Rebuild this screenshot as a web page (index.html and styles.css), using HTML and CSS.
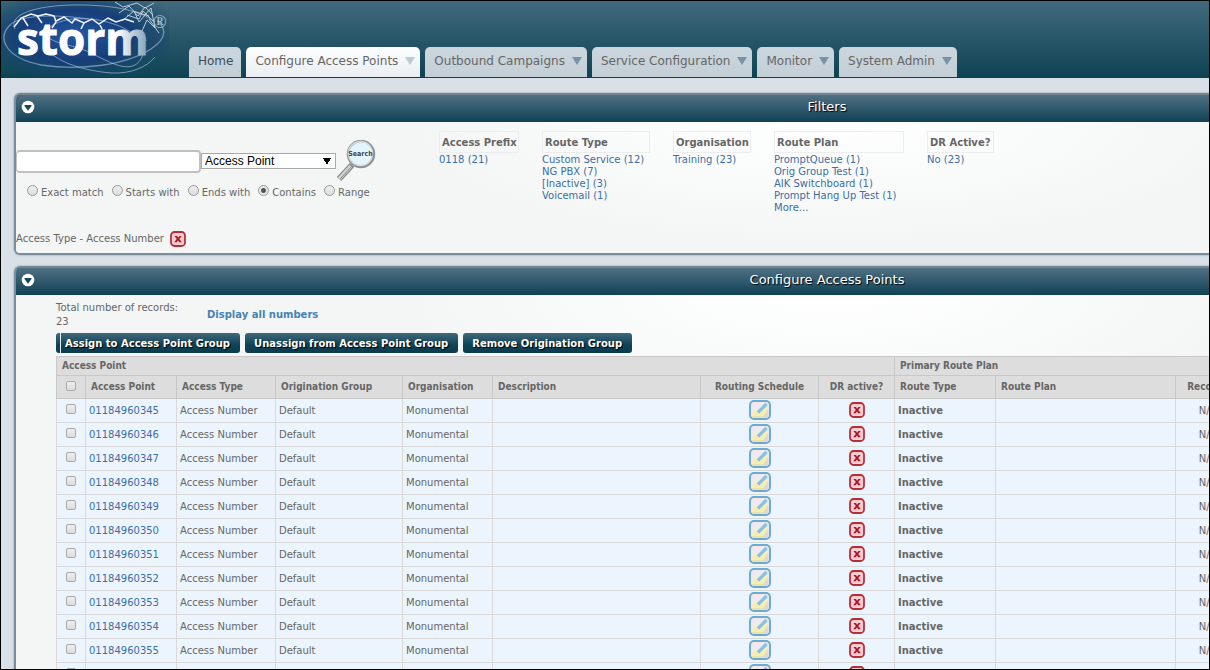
FILE: index.html
```html
<!DOCTYPE html>
<html lang="en">
<head>
<meta charset="utf-8">
<title>storm - Configure Access Points</title>
<link rel="stylesheet" href="styles.css">
</head>
<body>
<svg class="sprites" aria-hidden="true">
  <symbol id="icon-cross" viewBox="0 0 16 16">
    <rect x="1" y="1" width="14" height="14" rx="3.5" fill="#f8ccd0" stroke="#b3303a" stroke-width="1.8"/>
    <path d="M4.500 5h2.500l1.200 1.800L9.400 5h2.300L9.300 8l2.500 3.300H9.300L8 9.400l-1.300 1.900H4.200L6.800 8z" fill="#a81c29"/>
  </symbol>
  <symbol id="icon-note" viewBox="0 0 22 20">
    <rect x="1" y="1" width="20" height="18" rx="4" fill="#f1e9ee" stroke="#69abd3" stroke-width="2"/>
    <path d="M2.500 15.500 8 8l4 2 7-6v8l-5 6H4z" fill="#f6eeb4"/>
    <path d="M14 18l5.500-8v7l-2 1z" fill="#ddd8de"/>
    <path d="M9 12.500 17.500 4" fill="none" stroke="#84c0ea" stroke-width="3.200"/>
    <path d="M7.500 11.500 6.500 15l3.500-1z" fill="#f6e6a4"/>
    <path d="M3 17h11l5-7" fill="none" stroke="#e2d89f"/>
  </symbol>
  <symbol id="icon-collapse" viewBox="0 0 14 14">
    <circle cx="7" cy="7" r="6.3" fill="#fff"/>
    <path d="M3.500 5h7v1L7 10.800 3.500 6z" fill="#1d4558"/>
  </symbol>
</svg>

<div class="app">
  <header class="masthead">
    <svg class="logo" viewBox="0 0 168 76" role="img" aria-label="storm">
      <defs>
        <radialGradient id="glow" cx="44%" cy="45%" r="66%">
          <stop offset="0" stop-color="#2258a4"/>
          <stop offset=".5" stop-color="#173e79"/>
          <stop offset="1" stop-color="#124a62" stop-opacity="0"/>
        </radialGradient>
        <linearGradient id="word" x1="0" x2="1">
          <stop offset="0" stop-color="#fff"/>
          <stop offset=".76" stop-color="#fff"/>
          <stop offset="1" stop-color="#7f9fb8"/>
        </linearGradient>
      </defs>
      <rect width="168" height="76" fill="url(#glow)"/>
      <g fill="none" stroke="#a9c3e2">
        <path d="M14 28C6 12 40 3 84 4c40 1 60 9 70 17" stroke-width="1" opacity=".65"/>
        <path d="M10 23C-6 38 6 57 40 64c40 6 85 0 110-16 18-12 14-22 6-28" stroke-width="1.3" opacity=".6"/>
        <path d="M10 23C22 14 52 13 88 18M44 32c-8 18 20 36 66 40 20 1 36-6 44-16M44 32c6-12 30-18 58-12 26 6 48 20 38 38-10 16-30 4-50-6S50 44 44 32" stroke-width="1" opacity=".65"/>
        <path d="M13 26l7-9 10-4 7 2 8-2 8 2 2 6-4 6M55 20l8-4 8 6 3-4 9 4 8-4 7 5 9-6 8 4 9-3 9 3M22 17l5 8M36 15l5 7M83 22l-3 6M98 22l3 6" stroke="#eef5ff" stroke-width="1.5"/>
        <path d="M114 1l8 5 14-4 8 5 9-5M118 12l10-7 9 10 7-9 8 8M121 20l12-10 5 11 12-14 4 20-8-8-5 11 4 10M132 10l16 5M148 18l10 14M126 14l12 4 4-8 10 10" stroke="#c6d6e4" stroke-width="1" opacity=".9"/>
      </g>
      <text class="logo-word" x="16" y="54">storm</text>
      <text class="logo-mark" x="152" y="27">®</text>
    </svg>
    <nav class="tabs" aria-label="Main">
      <a class="tab tab-home" href="#">Home</a>
      <a class="tab tab-current" href="#">Configure Access Points<span class="caret"></span></a>
      <a class="tab" href="#">Outbound Campaigns<span class="caret"></span></a>
      <a class="tab" href="#">Service Configuration<span class="caret"></span></a>
      <a class="tab" href="#">Monitor<span class="caret"></span></a>
      <a class="tab" href="#">System Admin<span class="caret"></span></a>
    </nav>
  </header>

  <main class="content">
    <section class="panel">
      <div class="panel-bar">
        <button class="collapse" type="button" aria-label="Collapse filters"><svg class="collapse-icon"><use href="#icon-collapse"/></svg></button>
        <h2 class="panel-title">Filters</h2>
      </div>
      <div class="panel-body filters">
        <form class="search">
          <div class="search-row">
            <input class="search-text" type="text" aria-label="Search text">
            <select class="search-field" aria-label="Search field"><option>Access Point</option></select>
            <button class="search-go" type="button" aria-label="Search">
              <svg class="search-icon" viewBox="0 0 40 42">
                <path d="M16 25 3 39" stroke="#858585" stroke-width="6"/>
                <path d="M15 26 3 39" stroke="#d5d5d5" stroke-width="3.500"/>
                <path d="M16 26 4 39" stroke="#888" stroke-width="1"/>
                <circle cx="25" cy="14" r="13" fill="#e3f4fc" stroke="#8d9193" stroke-width="2.500"/>
                <circle cx="24.500" cy="13.500" r="12" fill="none" stroke="#d8dcde" stroke-width="1.500"/>
                <text class="search-icon-text" x="24.500" y="16" text-anchor="middle">Search</text>
              </svg>
            </button>
          </div>
          <div class="modes">
            <label class="mode"><input class="radio" type="radio" name="mode">Exact match</label>
            <label class="mode"><input class="radio" type="radio" name="mode">Starts with</label>
            <label class="mode"><input class="radio" type="radio" name="mode">Ends with</label>
            <label class="mode"><input class="radio" type="radio" name="mode" checked>Contains</label>
            <label class="mode"><input class="radio" type="radio" name="mode">Range</label>
          </div>
          <div class="applied">Access Type - Access Number
            <button class="icon-button" type="button" aria-label="Remove filter"><svg class="cross"><use href="#icon-cross"/></svg></button>
          </div>
        </form>
        <div class="facets">
          <div class="facet"><h3 class="facet-title">Access Prefix</h3><a class="link" href="#">0118 (21)</a></div>
          <div class="facet"><h3 class="facet-title">Route Type</h3><a class="link" href="#">Custom Service (12)</a><a class="link" href="#">NG PBX (7)</a><a class="link" href="#">[Inactive] (3)</a><a class="link" href="#">Voicemail (1)</a></div>
          <div class="facet"><h3 class="facet-title">Organisation</h3><a class="link" href="#">Training (23)</a></div>
          <div class="facet"><h3 class="facet-title">Route Plan</h3><a class="link" href="#">PromptQueue (1)</a><a class="link" href="#">Orig Group Test (1)</a><a class="link" href="#">AIK Switchboard (1)</a><a class="link" href="#">Prompt Hang Up Test (1)</a><a class="link" href="#">More...</a></div>
          <div class="facet"><h3 class="facet-title">DR Active?</h3><a class="link" href="#">No (23)</a></div>
        </div>
      </div>
    </section>

    <section class="panel">
      <div class="panel-bar">
        <button class="collapse" type="button" aria-label="Collapse access points"><svg class="collapse-icon"><use href="#icon-collapse"/></svg></button>
        <h2 class="panel-title">Configure Access Points</h2>
      </div>
      <div class="panel-body listing">
        <div class="summary">
          <p class="total">Total number of records: 23</p>
          <a class="link link-strong" href="#">Display all numbers</a>
        </div>
        <div class="actions">
          <button class="action action-split" type="button">Assign to Access Point Group</button>
          <button class="action" type="button">Unassign from Access Point Group</button>
          <button class="action" type="button">Remove Origination Group</button>
        </div>
        <table class="grid">
          <colgroup>
            <col class="c-check"><col class="c-point"><col class="c-type"><col class="c-group"><col class="c-org"><col class="c-desc"><col class="c-sched"><col class="c-dr"><col class="c-route"><col class="c-plan"><col class="c-rec"><col>
          </colgroup>
          <thead>
            <tr class="head-groups"><th colspan="8">Access Point</th><th colspan="4">Primary Route Plan</th></tr>
            <tr class="head-cols">
              <th class="mid"><input class="check" type="checkbox" aria-label="Select all"></th>
              <th>Access Point</th><th>Access Type</th><th>Origination Group</th><th>Organisation</th><th>Description</th><th class="mid">Routing Schedule</th><th class="mid">DR active?</th><th>Route Type</th><th>Route Plan</th><th class="mid">Records</th><th></th>
            </tr>
          </thead>
          <tbody id="rows"></tbody>
        </table>
      </div>
    </section>
  </main>
</div>
<script src="rows.js"></script>
</body>
</html>
```
FILE: rows.js
```js
const body = document.getElementById('rows');
for (let number = 1184960345; number <= 1184960356; number += 1) {
  const id = '0' + number;
  const row = document.createElement('tr');
  row.innerHTML = `
    <td class="mid"><input class="check" type="checkbox" aria-label="Select ${id}"></td>
    <td><a class="link" href="#">${id}</a></td>
    <td>Access Number</td><td>Default</td><td>Monumental</td><td></td>
    <td class="mid"><button class="icon-button" type="button" aria-label="Edit schedule"><svg class="note"><use href="#icon-note"/></svg></button></td>
    <td class="mid"><svg class="cross" role="img" aria-label="No"><use href="#icon-cross"/></svg></td>
    <td class="strong">Inactive</td><td></td><td class="mid">N/A</td><td></td>`;
  body.append(row);
}
```
FILE: styles.css
```css
* { box-sizing: border-box; }

body {
  margin: 0;
  height: 100vh;
  border: 1px solid #000;
  overflow: hidden;
  background: #d9e0e8;
  color: #666;
  font: 10px/14px Verdana, "DejaVu Sans", sans-serif;
}

h2, h3, p { margin: 0; }
button { font-family: inherit; }
.sprites { position: absolute; width: 0; height: 0; }
.app { min-width: 1652px; }

.masthead {
  display: flex;
  align-items: flex-end;
  height: 77px;
  border-bottom: 1px solid #0f3f52;
  background: linear-gradient(#42697d, #0e4354);
}
.logo { flex: none; width: 168px; height: 76px; }
.logo-word {
  fill: url(#word);
  stroke: url(#word);
  stroke-width: 1px;
  font: 700 44px "Open Sans", sans-serif;
}
.logo-mark { font: 18px "Liberation Serif", serif; fill: #b8c9d6; }

.tabs { display: flex; gap: 5px; padding-left: 20px; }
.tab {
  display: flex;
  align-items: center;
  gap: 7px;
  height: 30px;
  padding: 0 5px 3px 9px;
  border-radius: 5px 5px 0 0;
  background: linear-gradient(#ccd6de, #c3ced5);
  color: #666;
  font-size: 12px;
  text-decoration: none;
}
.tab-home { padding-right: 8px; color: #3c4b5c; }
.tab-current { background: linear-gradient(#fcfdfe, #eaeef2); }
.caret {
  border: 5px solid transparent;
  border-top: 8px solid #7893a8;
  border-bottom: 0;
}
.tab-current .caret { border-top-color: #bccbd4; }

.content { display: grid; gap: 11px; padding: 15px 13px; }
.panel {
  border: 2px solid #7a8d98;
  border-top: 0;
  border-radius: 6px;
  overflow: hidden;
  box-shadow: 0 0 2px #7a8d98;
}
.panel-bar {
  display: flex;
  align-items: center;
  height: 29px;
  padding: 0 5px 4px;
  border-top: 2px solid #758590;
  background: linear-gradient(#507083, #104155);
}
.collapse { padding: 0; border: 0; background: none; }
.collapse-icon { display: block; width: 14px; height: 14px; }
.panel-title {
  flex: 1;
  padding-right: 14px;
  color: #fff;
  font-size: 13px;
  font-weight: 400;
  text-align: center;
  text-shadow: 1px 1px 1px #000;
}
.panel-body {
  background: radial-gradient(ellipse 420px 120px at 50% 0, #fff, #f4f6f6);
}

.filters { display: flex; min-height: 131px; }
.search { flex: none; width: 423px; padding-top: 18px; }
.search-row { display: flex; align-items: center; }
.search-text {
  width: 185px;
  height: 23px;
  border: 2px solid #c0c0c0;
  border-left-width: 1px;
  border-radius: 4px;
  background: #fff;
}
.search-field {
  width: 135px;
  height: 16px;
  padding: 0 3px;
  appearance: none;
  border: 1px solid #a9a9a9;
  border-radius: 0;
  background:
    linear-gradient(to top right, transparent 50%, #000 50%) no-repeat right 8px center / 4px 7px,
    linear-gradient(to top left, transparent 50%, #000 50%) no-repeat right 4px center / 4px 7px,
    #fff;
  color: #000;
  font: 12px/14px "Liberation Sans", sans-serif;
}
.search-go { padding: 0; border: 0; background: none; }
.search-icon { display: block; width: 40px; height: 42px; }
.search-icon-text { font: 700 7px "DejaVu Sans Condensed", sans-serif; fill: #444; }

.modes { display: flex; gap: 8px; padding: 3px 11px; }
.mode { display: flex; align-items: center; gap: 3px; }
.radio {
  width: 11px;
  height: 11px;
  margin: 0 0 4px;
  appearance: none;
  border: 1px solid #999;
  border-radius: 50%;
  background: linear-gradient(#eee, #ddd);
}
.radio:checked { background: radial-gradient(circle, #555 0 2px, #e8e8e8 3px); }
.applied { display: flex; align-items: center; gap: 6px; padding-top: 28px; }
.icon-button { display: inline-block; padding: 0; border: 0; background: none; vertical-align: middle; }
.cross { display: block; width: 16px; height: 16px; }

.facets {
  display: grid;
  grid-template-columns: 80px 108px 78px 130px 67px;
  align-items: start;
  gap: 23px;
  padding-top: 9px;
}
.facet { display: flex; flex-direction: column; line-height: 12px; white-space: nowrap; }
.facet-title {
  height: 22px;
  margin-bottom: 1px;
  padding: 4px 2px;
  border: 1px solid #ebedee;
  font-size: 10px;
  line-height: 14px;
}
.link { color: #3a6ea5; text-decoration: none; }

.listing { padding: 6px 40px; }
.summary { display: flex; align-items: center; gap: 21px; }
.total { width: 130px; }
.link-strong { color: #4682b4; font-weight: 700; }
.actions { display: flex; gap: 5px; padding: 4px 0 3px; }
.action {
  height: 20px;
  padding: 0 10px 0 9px;
  border: 0;
  border-radius: 3px;
  background: linear-gradient(#42687b, #0f4256 60%, #0c3a4d);
  color: #fff;
  font-size: 10px;
  font-weight: 700;
  text-shadow: 1px 1px 1px #000;
}
.action-split { background: linear-gradient(#e6ecef, #e6ecef) no-repeat 4px 0 / 1px 100%, linear-gradient(#42687b, #0f4256 60%, #0c3a4d); }

.grid { width: 100%; table-layout: fixed; border-collapse: collapse; background: #ecf5fd; }
.grid th, .grid td { padding: 0 3px; border: 1px solid #d9d9d9; text-align: left; white-space: nowrap; }
.grid th {
  padding: 0 5px;
  border-color: #c8c8c8;
  background: #ddd;
  font-family: "DejaVu Sans Condensed", "DejaVu Sans", sans-serif;
}
.grid .mid { padding: 0; text-align: center; }
.grid .mid .cross { margin: 0 auto 2px; }
.grid .strong { font-weight: 700; }
.head-groups { height: 19px; }
.head-cols { height: 23px; }
tbody tr { height: 24px; }
.note { display: block; width: 22px; height: 20px; margin-bottom: 1px; }
.check {
  display: block;
  width: 10px;
  height: 10px;
  margin: 0 auto 3px;
  appearance: none;
  border: 1px solid #aaa;
  border-radius: 2px;
  background: linear-gradient(#eee, #ddd);
}
.c-check { width: 29px; }
.c-point { width: 91px; }
.c-type { width: 99px; }
.c-group { width: 127px; }
.c-org { width: 90px; }
.c-desc { width: 208px; }
.c-sched { width: 118px; }
.c-dr { width: 76px; }
.c-route { width: 101px; }
.c-plan { width: 180px; }
.c-rec { width: 64px; }
```
